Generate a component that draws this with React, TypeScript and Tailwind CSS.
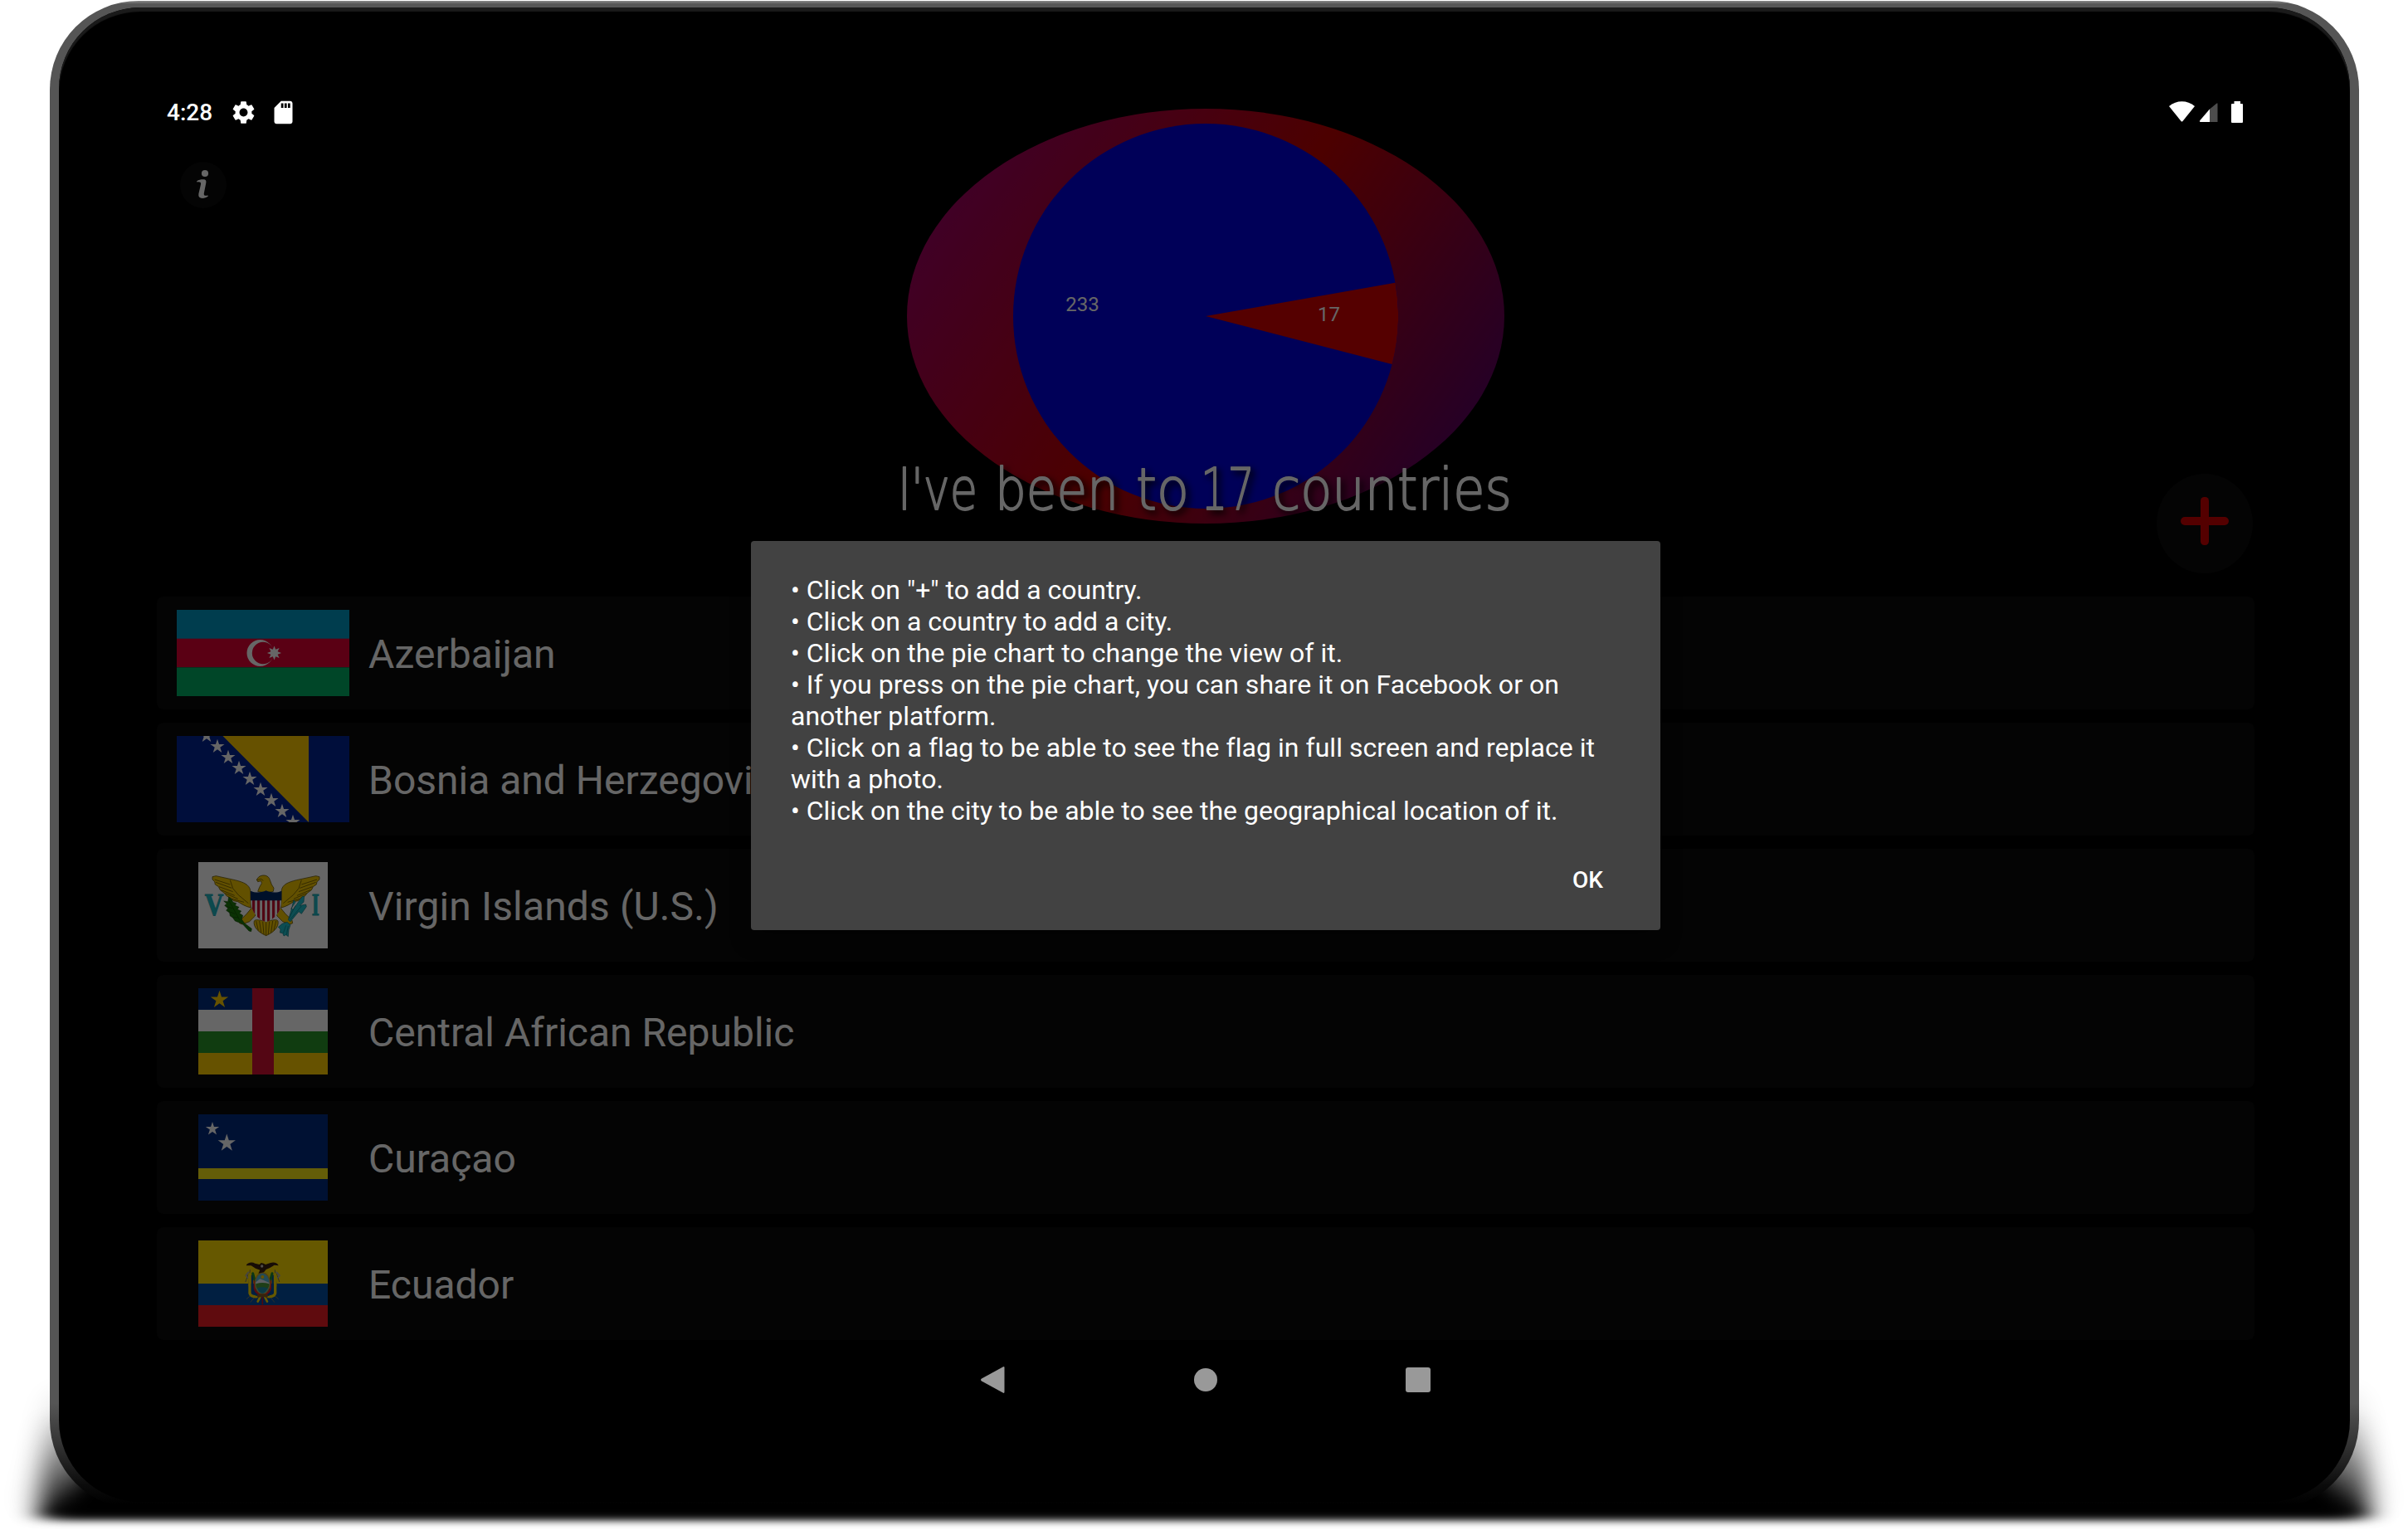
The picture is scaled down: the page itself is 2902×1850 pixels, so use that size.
import React from "react";
import { MdSettings, MdSdCard } from "react-icons/md";

function starPoints(cx: number, cy: number, r: number, n = 5, ratio = 0.382) {
  const pts: string[] = [];
  for (let i = 0; i < n * 2; i++) {
    const a = -Math.PI / 2 + (i * Math.PI) / n;
    const k = i % 2 === 0 ? r : r * ratio;
    pts.push(`${(cx + k * Math.cos(a)).toFixed(2)},${(cy + k * Math.sin(a)).toFixed(2)}`);
  }
  return pts.join(" ");
}

const Azerbaijan = () => (
  <svg width="208" height="104" viewBox="0 0 208 104">
    <rect width="208" height="35" fill="#0098c3" />
    <rect y="34.67" width="208" height="34.67" fill="#e00034" />
    <rect y="69.33" width="208" height="34.67" fill="#00ae65" />
    <circle cx="100.5" cy="52" r="16" fill="#fff" />
    <circle cx="104" cy="52" r="13.2" fill="#e00034" />
    <polygon points={starPoints(117.5, 52, 8.6, 8, 0.52)} fill="#fff" />
  </svg>
);

const Bosnia = () => (
  <svg width="208" height="104" viewBox="0 0 208 104">
    <rect width="208" height="104" fill="#002395" />
    <path d="M55.5 0H159V104Z" fill="#fecb00" />
    {[0, 1, 2, 3, 4, 5, 6, 7, 8].map((i) => (
      <polygon key={i} points={starPoints(36 + i * 13, i * 13 - 0.3, 9)} fill="#fff" />
    ))}
  </svg>
);

const VirginIslands = () => (
  <svg width="156" height="104" viewBox="57 27 468 312">
    <rect x="57" y="27" width="468" height="312" fill="#fff" />
    <g stroke="#5a4a00" strokeWidth="2.2" strokeLinejoin="round" fill="#f5c800">
      <path d="M108 80L121 77L190 92C222 100 240 108 245 128L247 192C228 188 212 178 200 170L184 167L176 158L160 150L150 138L136 128L130 116L118 108L116 98L108 90Z" />
      <path d="M495 80L482 77L412 92C380 100 362 108 358 128L356 192C375 188 390 178 402 170L418 167L426 158L442 150L452 138L466 128L472 116L484 108L486 98L495 90Z" />
      <path d="M116 90L172 108M120 100L178 121M132 116L182 134M140 128L188 148M154 140L200 160M178 160L222 172M172 92L182 122L202 146L238 176M486 90L430 108M482 100L424 121M470 116L420 134M462 128L414 148M448 140L402 160M424 160L380 172M430 92L420 122L400 146L364 176" fill="none" />
      <path d="M272 133L278 118L286 104L284 95L272 98L268 90L276 80C292 70 312 75 316 92L322 108L330 121L328 133L302 140Z" />
      <path d="M268 92L284 88L292 94" fill="none" />
      <path d="M252 190L232 214L208 238L206 248L216 252L242 242L262 222L266 205Z" />
      <path d="M352 190L372 214L396 238L398 248L388 252L362 242L342 222L338 205Z" />
      <path d="M259 240C264 232 280 238 302 240C324 238 340 232 345 240C350 262 328 282 302 293C276 282 254 262 259 240Z" />
      <path d="M302 242V292M290 242L294 288M314 242L310 288M278 240L284 282M326 240L320 282M266 240L274 274M338 240L330 274" fill="none" />
    </g>
    <path d="M247 164C247 196 258 226 302 244C346 226 357 196 357 164Z" fill="#fff" />
    <clipPath id="vi-shield">
      <path d="M247 164C247 196 258 226 302 244C346 226 357 196 357 164Z" />
    </clipPath>
    <g clipPath="url(#vi-shield)" fill="#c8102e">
      {[252, 270, 288, 306, 324, 342].map((x) => (
        <rect key={x} x={x} y="160" width="9.5" height="90" />
      ))}
    </g>
    <path d="M246 131C262 139 286 138 302 130C318 138 342 139 358 131V166H246Z" fill="#002868" />
    <g fill="#1a7a0a" stroke="#0a3d00" strokeWidth="1.5">
      <path d="M167 153L178 162L182 172L194 176L190 184L204 190L198 198L212 204L206 212L218 220L214 234L224 248L250 268L248 278L240 276L216 250L190 240L180 226L172 222L170 210L158 202L164 194L152 184L160 178L149 168L164 170Z" />
      <path d="M169 168L206 236M160 188L180 194M166 206L190 214M178 226L200 228" fill="none" />
    </g>
    <g fill="#1fc0cc" stroke="#0c6a74" strokeWidth="1.8" strokeLinejoin="round">
      <path d="M402 164L408 172L392 196L400 198L432 152L440 150L438 172L424 184L446 180L448 188L430 214L420 206L390 242L382 236L392 204Z" />
      <path d="M378 244L390 254L384 272L382 296L374 290L366 294L362 284L352 282L354 270L346 262L360 250Z" />
      <path d="M374 256L364 284M382 258L376 290M388 236L430 186M384 232L408 184" fill="none" />
    </g>
    <g fontFamily="Liberation Serif, serif" fontWeight="700" fill="#1fb8c4" stroke="#1fa8b4" strokeWidth="3">
      <text x="80" y="220" fontSize="114" textLength="68" lengthAdjust="spacingAndGlyphs">V</text>
      <text x="467" y="220" fontSize="114" textLength="27" lengthAdjust="spacingAndGlyphs">I</text>
    </g>
  </svg>
);

const CentralAfrica = () => (
  <svg width="156" height="104" viewBox="0 0 156 104">
    <rect width="156" height="26" fill="#002f80" />
    <rect y="26" width="156" height="26" fill="#fff" />
    <rect y="52" width="156" height="26" fill="#289728" />
    <rect y="78" width="156" height="26" fill="#ffce00" />
    <rect x="65" width="26" height="104" fill="#d21034" />
    <polygon points={starPoints(25.5, 14, 11.2)} fill="#ffce00" />
  </svg>
);

const Curacao = () => (
  <svg width="156" height="104" viewBox="0 0 156 104">
    <rect width="156" height="104" fill="#002b7f" />
    <rect y="65" width="156" height="13" fill="#f9e814" />
    <polygon points={starPoints(17, 17.6, 8.6)} fill="#fff" />
    <polygon points={starPoints(34.3, 34.6, 11.2)} fill="#fff" />
  </svg>
);

const Ecuador = () => (
  <svg width="156" height="104" viewBox="717 -15 468 312">
    <rect x="717" y="-15" width="468" height="156" fill="#ffdd00" />
    <rect x="717" y="141" width="468" height="78" fill="#034ea2" />
    <rect x="717" y="219" width="468" height="78" fill="#ed1c24" />
    <g strokeLinecap="round" fill="none">
      <path d="M904 92L898 150M898 106L888 134M994 92L1000 150M1000 106L1010 134M906 208L922 188M892 196L904 186M992 208L976 188M1006 196L994 186" stroke="#777766" strokeWidth="3" />
      <path d="M898 100L889 112L896 120M1000 100L1011 112L1004 120" stroke="#aaaaaa" strokeWidth="5" />
      <path d="M903 108V176Q906 190 930 188M995 108V176Q992 190 968 188" stroke="#ffdd00" strokeWidth="10" />
      <path d="M912 112V166Q916 182 936 184M986 112V166Q982 182 962 184" stroke="#034ea2" strokeWidth="7" />
      <path d="M920 130V158Q924 176 942 180M978 130V158Q974 176 956 180" stroke="#ed1c24" strokeWidth="6" />
      <path d="M914 104L920 126M984 104L978 126" stroke="#1c8a34" strokeWidth="9" />
      <path d="M940 190L932 206M958 190L966 206" stroke="#ffdd00" strokeWidth="8" />
      <path d="M949 190V216" stroke="#c01525" strokeWidth="5" />
    </g>
    <ellipse cx="949" cy="140" rx="29" ry="40" fill="#c8a030" />
    <ellipse cx="949" cy="140" rx="25" ry="36" fill="#58b8d8" />
    <circle cx="949" cy="117" r="6" fill="#ffd000" />
    <path d="M925 136L940 124L952 128L973 138V144H925Z" fill="#e8eef4" />
    <path d="M925 142Q949 134 973 142Q974 152 968 160H930Q924 152 925 142Z" fill="#4d9c3a" />
    <path d="M930 158Q949 150 968 158Q960 174 949 176Q936 174 930 158Z" fill="#1f8fa8" />
    <path d="M928 182Q949 174 970 182L966 192Q949 186 932 192Z" fill="#8a5a20" />
    <path d="M890 76C894 64 912 62 922 68L938 72L944 66L953 68L960 72L978 66C990 62 1004 66 1007 76L992 74L976 84L962 90L954 100L934 104L940 92L924 86L908 76Z" fill="#3a1f10" />
    <circle cx="947" cy="78" r="5" fill="#c8c0b8" />
  </svg>
);

const countries: { name: string; Flag: React.FC; spacing?: string }[] = [
  { name: "Azerbaijan", Flag: Azerbaijan },
  { name: "Bosnia and Herzegovina", Flag: Bosnia },
  { name: "Virgin Islands (U.S.)", Flag: VirginIslands, spacing: "tracking-[0.13px]" },
  { name: "Central African Republic", Flag: CentralAfrica },
  { name: "Curaçao", Flag: Curacao },
  { name: "Ecuador", Flag: Ecuador },
];

const tips: { text: string; spacing?: string }[] = [
  { text: '• Click on "+" to add a country.' },
  { text: "• Click on a country to add a city." },
  { text: "• Click on the pie chart to change the view of it.", spacing: "tracking-[0.04px]" },
  { text: "• If you press on the pie chart, you can share it on Facebook or on", spacing: "tracking-[0.05px]" },
  { text: "another platform." },
  { text: "• Click on a flag to be able to see the flag in full screen and replace it", spacing: "tracking-[0.05px]" },
  { text: "with a photo." },
  { text: "• Click on the city to be able to see the geographical location of it." },
];

const titleWords = [
  { text: "I've", x: 19, w: 96 },
  { text: "been", x: 136, w: 149 },
  { text: "to", x: 306, w: 64 },
  { text: "17", x: 384, w: 65 },
  { text: "countries", x: 470, w: 289 },
];

function PieChart() {
  const point = (deg: number) => {
    const a = (deg * Math.PI) / 180;
    return `${(232 + 232 * Math.cos(a)).toFixed(2)} ${(232 + 232 * Math.sin(a)).toFixed(2)}`;
  };
  return (
    <svg width="464" height="464" viewBox="0 0 464 464">
      <circle cx="232" cy="232" r="232" fill="#0000dc" />
      <path d={`M232 232L${point(-10)}A232 232 0 0 1 ${point(14.48)}Z`} fill="#d40000" />
      <g fontFamily="Roboto, sans-serif" fontSize="24" fill="#fff" textAnchor="middle">
        <text x="83.5" y="226">233</text>
        <text x="380.5" y="238">17</text>
      </g>
    </svg>
  );
}

function Header() {
  return (
    <header className="relative flex h-[608px] items-start pt-5">
      <div className="flex w-[920px] shrink-0 pt-16 pl-11">
        <button className="flex size-14 items-center justify-center rounded-full bg-[#0a0a0a]">
          <svg className="-mt-0.5 -ml-0.5" width="16" height="36" viewBox="0 0 16 36" fill="#fff">
            <circle cx="11" cy="5" r="4.1" />
            <path d="M1.2 14.2C4 12.6 8 12 11 12.6C12.6 13.2 12.6 15 12.2 17L9.8 29C9.5 31.2 10.4 32.6 14.6 31.4L14.8 32.6C12.4 34.6 9 35.2 6.4 34.8C3.6 34.2 3 32.4 3.4 29.6L6 18.2C6.4 16 5.8 14.8 1.4 15.4Z" />
          </svg>
        </button>
      </div>
      <div className="flex h-[500px] w-[720px] shrink-0 items-center justify-center rounded-[50%] bg-[linear-gradient(124.8deg,#96007d_0%,#be0000_50%,#41007d_100%)]">
        <PieChart />
      </div>
      <div className="flex w-[920px] shrink-0 justify-end pt-[440px] pr-[18px]">
        <button className="flex h-[120px] w-[116px] items-center justify-center rounded-[50%] bg-[#0a0a0a]">
          <svg className="-mt-1.5" width="58" height="58" viewBox="0 0 58 58" fill="#d20000">
            <rect x="0" y="24" width="58" height="10" rx="5" />
            <rect x="24" y="0" width="10" height="58" rx="4.5" />
          </svg>
        </button>
      </div>
      <div className="absolute inset-x-0 top-[434px] flex justify-center">
        <svg width="780" height="100" viewBox="0 0 780 100" className="overflow-visible [filter:drop-shadow(4px_4px_4px_#000)]">
          <g fontSize="70" fontFamily="DejaVu Sans" fontWeight="200" fill="#fff" stroke="#fff" strokeWidth="1.8" strokeLinejoin="round">
            {titleWords.map(({ text, x, w }) => (
              <text key={text} x={x} y="69" textLength={w} lengthAdjust="spacingAndGlyphs">
                {text}
              </text>
            ))}
          </g>
        </svg>
      </div>
    </header>
  );
}

function CountryList() {
  return (
    <ul className="flex flex-col gap-4 px-4">
      {countries.map(({ name, Flag, spacing }) => (
        <li key={name} className="flex h-[136px] items-center rounded-lg bg-[#0a0a0a] pl-6">
          <div className="flex w-[208px] justify-center">
            <Flag />
          </div>
          <span className={`ml-[23px] pt-1 text-[48px] leading-none text-white ${spacing ?? ""}`}>{name}</span>
        </li>
      ))}
    </ul>
  );
}

function StatusBar() {
  return (
    <div className="absolute inset-x-0 top-0 flex h-12 items-center justify-between pr-[30px] pl-7 text-white">
      <div className="flex items-center">
        <span className="w-[76px] pt-0.5 text-[28px] leading-none font-medium">4:28</span>
        <MdSettings className="size-[33px]" />
        <MdSdCard className="ml-[15px] size-[33px]" />
      </div>
      <svg width="89" height="26" viewBox="0 0 89 26" fill="#fff">
        <path d="M0 6C9-1.6 22-1.6 31 6L16.5 24Q15.5 25.2 14.5 24Z" />
        <path d="M58.5 2.6V25H49V9.4L57.5 2.6Z" fill="#4d4d4d" />
        <path d="M49 9.6V25H37.6Q36.2 24.4 37.4 23Z" />
        <path d="M78.5 0H86V3H88Q89 3 89 4V25Q89 26 88 26H76Q75 26 75 25V4Q75 3 76 3H78.5Z" />
      </svg>
    </div>
  );
}

function NavBar() {
  return (
    <div className="absolute inset-x-0 bottom-0 flex h-24 items-center justify-center gap-[227px] pr-[3px]">
      <svg width="32" height="32" viewBox="0 0 32 32" fill="#999">
        <path d="M28.6.4Q30.5-.6 30.5 1.4V30.6Q30.5 32.6 28.6 31.6L3 17.4Q1 16 3 14.6Z" />
      </svg>
      <div className="size-7 rounded-full bg-[#999]" />
      <div className="size-[30px] rounded-[3px] bg-[#999]" />
    </div>
  );
}

function HelpDialog() {
  return (
    <div className="absolute inset-0 flex items-start justify-center pt-[541px]">
      <div className="flex h-[469px] w-[1096px] flex-col rounded bg-[#424242] px-12 pt-10 text-white shadow-[0_12px_24px_rgba(0,0,0,0.35)]">
        <div className="text-[32px] leading-[38px] whitespace-nowrap">
          {tips.map(({ text, spacing }) => (
            <p key={text} className={spacing}>
              {text}
            </p>
          ))}
        </div>
        <div className="mt-[46px] flex justify-end pr-[21px]">
          <button className="text-[28px] leading-[38px] font-medium">OK</button>
        </div>
      </div>
    </div>
  );
}

export default function App() {
  return (
    <div className="relative h-[1850px] w-[2902px] overflow-hidden bg-white font-[Roboto,sans-serif]">
      <svg className="absolute inset-0" width="2902" height="1850" viewBox="0 0 2902 1850">
        <defs>
          <filter id="ground" x="-5%" y="-50%" width="110%" height="200%">
            <feGaussianBlur stdDeviation="15 5.5" />
          </filter>
          <filter id="haze" x="-5%" y="-50%" width="110%" height="200%">
            <feGaussianBlur stdDeviation="16 14" />
          </filter>
          <linearGradient id="fade" x1="0" y1="0" x2="0" y2="1">
            <stop offset="0" stopOpacity="0" />
            <stop offset="1" stopOpacity="1" />
          </linearGradient>
        </defs>
        <path d="M60 1680H2842L2876 1820H26Z" fill="#000" opacity="0.09" filter="url(#haze)" />
        <path d="M58 1700H2844L2856 1830H46Z" fill="url(#fade)" filter="url(#ground)" />
        <path d="M110 1770H2792L2838 1829H64Z" fill="#000" filter="url(#ground)" />
      </svg>
      <div className="relative mt-px ml-[60px] flex h-[1818px] w-[2783px] justify-center rounded-[107px] bg-[linear-gradient(180deg,#888_0px,#555_4px,#555_1690px,#333_1740px,#0a0a0a_1790px,#000_1812px)] pt-2">
        <div className="h-[1801px] w-[2761px] rounded-[98px] bg-black pt-[102px] pl-[102px] shadow-[inset_0_5px_1px_#1a1a1a]">
          <div className="relative h-[1600px] w-[2560px]">
            <Header />
            <CountryList />
            <div className="absolute inset-0 bg-black/60" />
            <StatusBar />
            <NavBar />
            <HelpDialog />
          </div>
        </div>
      </div>
    </div>
  );
}
